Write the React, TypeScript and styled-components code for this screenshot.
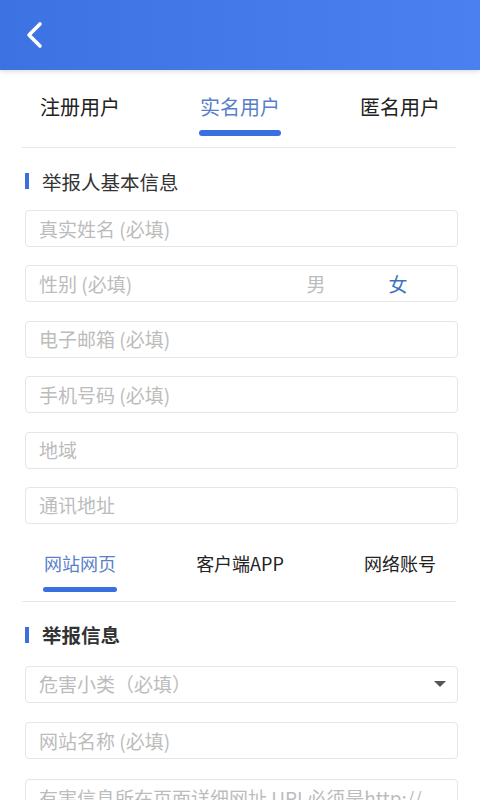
import React, { useState } from 'react'
import styled, { createGlobalStyle } from 'styled-components'

const GlobalStyle = createGlobalStyle`
    * { box-sizing: border-box; }
    body {
        margin: 0;
        background: #fff;
        font-family: "Noto Sans CJK SC", "Noto Sans", "Liberation Sans", sans-serif;
        color: #333;
    }
`

const Page = styled.div`
    width: 480px;
    height: 800px;
    overflow: hidden;
    background: #fff;
`

const Header = styled.div`
    height: 70px;
    display: flex;
    align-items: center;
    padding-left: 22px;
    background: linear-gradient(90deg, #3d72e3, #4a80ef);
    box-shadow: 0 2px 4px rgba(0, 0, 0, 0.12);
    position: relative;
    z-index: 1;
`

const BackButton = styled.button`
    width: 26px;
    height: 32px;
    padding: 0;
    border: none;
    background: none;
    display: flex;
    align-items: center;
    justify-content: center;
`

const Tabs = styled.div<{ $height: number }>`
    display: grid;
    grid-template-columns: repeat(3, 1fr);
    height: ${p => p.$height}px;
`

const Tab = styled.div<{ $active?: boolean; $size: number; $top: number }>`
    display: flex;
    flex-direction: column;
    align-items: center;
    padding-top: ${p => p.$top}px;
    font-size: ${p => p.$size}px;
    line-height: 28px;
    color: ${p => (p.$active ? '#5a7fca' : '#222')};
`

const TabLine = styled.div<{ $width: number; $height: number; $gap: number }>`
    width: ${p => p.$width}px;
    height: ${p => p.$height}px;
    margin-top: ${p => p.$gap}px;
    border-radius: 3px;
    background: #3a6fdf;
`

const Divider = styled.div`
    height: 1px;
    margin: 0 24px 0 22px;
    background: #e8e8e8;
`

const SectionTitle = styled.div<{ $bold?: boolean; $top: number; $bottom: number }>`
    display: flex;
    align-items: center;
    height: 26px;
    margin: ${p => p.$top}px 0 ${p => p.$bottom}px 25px;
    font-size: 19.5px;
    font-weight: ${p => (p.$bold ? 600 : 400)};
    color: #333;
    &::before {
        content: '';
        width: 4px;
        height: 16px;
        margin-right: 13px;
        background: #3a6fdf;
    }
`

const Fields = styled.div<{ $gap: number }>`
    display: flex;
    flex-direction: column;
    gap: ${p => p.$gap}px;
    padding: 0 22px 0 25px;
`

const Field = styled.div<{ $tall?: boolean }>`
    height: ${p => (p.$tall ? 110 : 37)}px;
    border: 1px solid #e6e6e6;
    border-radius: 4px;
    display: flex;
    align-items: ${p => (p.$tall ? 'flex-start' : 'center')};
    padding: ${p => (p.$tall ? '5px 13px 0' : '0 13px')};
    font-size: 19px;
    line-height: 26px;
    color: #bcbcbc;
    white-space: nowrap;
    overflow: hidden;
`

const Placeholder = styled.span`
    flex: 1;
`

const Option = styled.span<{ $active?: boolean }>`
    width: 82px;
    text-align: center;
    color: ${p => (p.$active ? '#3e72c0' : '#bcbcbc')};
`

const GenderEnd = styled.span`
    width: 5px;
`

const Caret = styled.span`
    width: 0;
    height: 0;
    margin-right: -2px;
    border-left: 6px solid transparent;
    border-right: 6px solid transparent;
    border-top: 6px solid #555;
`

const userTabs = ['注册用户', '实名用户', '匿名用户']
const sourceTabs = ['网站网页', '客户端APP', '网络账号']

const App = () => {
    const [userTab, setUserTab] = useState(1)
    const [sourceTab, setSourceTab] = useState(0)
    const [gender, setGender] = useState(1)

    return (
        <Page>
            <GlobalStyle />
            <Header>
                <BackButton aria-label="返回">
                    <svg width="20" height="28" viewBox="0 0 20 28">
                        <path d="M15 3 L4 14 L15 25" fill="none" stroke="#fff" strokeWidth="3.6" strokeLinecap="round" strokeLinejoin="round" />
                    </svg>
                </BackButton>
            </Header>

            <Tabs $height={77}>
                {userTabs.map((t, i) => (
                    <Tab key={t} $size={20} $top={23} $active={i === userTab} onClick={() => setUserTab(i)}>
                        {t}
                        {i === userTab && <TabLine $width={82} $height={6} $gap={9} />}
                    </Tab>
                ))}
            </Tabs>
            <Divider />

            <SectionTitle $top={20} $bottom={16}>举报人基本信息</SectionTitle>
            <Fields $gap={18.4}>
                <Field><Placeholder>真实姓名 (必填)</Placeholder></Field>
                <Field>
                    <Placeholder>性别 (必填)</Placeholder>
                    {['男', '女'].map((g, i) => (
                        <Option key={g} $active={i === gender} onClick={() => setGender(i)}>{g}</Option>
                    ))}
                    <GenderEnd />
                </Field>
                <Field><Placeholder>电子邮箱 (必填)</Placeholder></Field>
                <Field><Placeholder>手机号码 (必填)</Placeholder></Field>
                <Field><Placeholder>地域</Placeholder></Field>
                <Field><Placeholder>通讯地址</Placeholder></Field>
            </Fields>

            <Tabs $height={77}>
                {sourceTabs.map((t, i) => (
                    <Tab key={t} $size={18} $top={25} $active={i === sourceTab} onClick={() => setSourceTab(i)}>
                        {t}
                        {i === sourceTab && <TabLine $width={74} $height={5} $gap={10} />}
                    </Tab>
                ))}
            </Tabs>
            <Divider />

            <SectionTitle $bold $top={20} $bottom={18}>举报信息</SectionTitle>
            <Fields $gap={19.5}>
                <Field>
                    <Placeholder>危害小类（必填）</Placeholder>
                    <Caret />
                </Field>
                <Field><Placeholder>网站名称 (必填)</Placeholder></Field>
                <Field $tall><Placeholder>有害信息所在页面详细网址 URL必须是http://</Placeholder></Field>
            </Fields>
        </Page>
    )
}

export default App
